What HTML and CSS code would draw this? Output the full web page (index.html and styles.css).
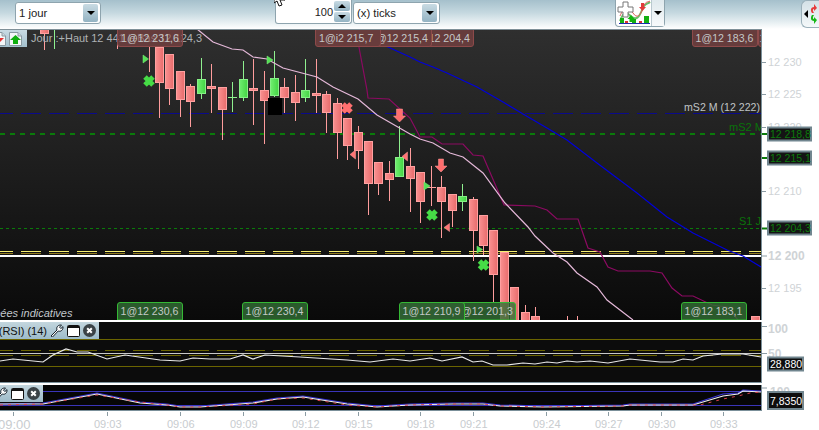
FILE: index.html
```html
<!DOCTYPE html>
<html lang="fr">
<head>
<meta charset="utf-8">
<title>Graphique</title>
<link rel="stylesheet" href="styles.css">
</head>
<body>
<svg class="defs" width="0" height="0">
  <defs>
    <linearGradient id="chartbg" x1="0" y1="0" x2="0" y2="1"><stop offset="0" stop-color="#2f2f2f"/><stop offset="1" stop-color="#0a0a0a"/></linearGradient>
    <linearGradient id="redbody" x1="0" y1="0" x2="1" y2="0"><stop offset="0" stop-color="#f99090"/><stop offset="1" stop-color="#e86c6c"/></linearGradient>
    <linearGradient id="greenbody" x1="0" y1="0" x2="1" y2="0"><stop offset="0" stop-color="#70ee70"/><stop offset="1" stop-color="#44d444"/></linearGradient>
    <symbol id="wrench" viewBox="0 0 14 13"><path d="M1 12 L7 6 C6 3 8 .8 11.5 1 L9.500 3.200 L10.800 4.600 L13 2.600 C13.300 6 11 8 8.200 7 L2.500 13 Z" fill="#fff" stroke="#14202a" stroke-width="1"/></symbol>
    <symbol id="win" viewBox="0 0 13 12"><rect x=".5" y=".5" width="12" height="11" rx="1" fill="#fff" stroke="#111"/><rect x="1" y="1" width="11" height="2" fill="#111"/></symbol>
    <symbol id="close" viewBox="0 0 13 13"><circle cx="6.500" cy="6.500" r="6.500" fill="#3a4246"/><path d="M4.200 4.200l4.600 4.600m0-4.600l-4.600 4.600" stroke="#fff" stroke-width="2"/></symbol>
    <symbol id="doc" viewBox="0 0 13 14"><path d="M.5 .5H9L12.500 4V13.500H.5Z" fill="#f4f7f8" stroke="#8a9aa2"/><path d="M9 .5V4H12.500" fill="#cfd9de" stroke="#8a9aa2"/></symbol>
  </defs>
</svg>

<header class="toolbar">
  <div class="combo combo-period"><span class="combo-text">1 jour</span><span class="drop"><i class="caret"></i></span></div>
  <div class="spinner">
    <span class="spin-value">100</span>
    <span class="spin-btns"><span class="spin-btn"><i class="caret caret-up"></i></span><span class="spin-btn"><i class="caret"></i></span></span>
  </div>
  <div class="combo combo-unit"><span class="combo-text">(x) ticks</span><span class="drop"><i class="caret"></i></span></div>
  <div class="indicator-btn">
    <span class="indicator-icon">
      <svg width="34" height="25" viewBox="0 0 34 25">
        <path d="M3 21C8 8 11 14 15 17S22 18 25 10 30 5 33 2" class="ic-green"/>
        <path d="M3 16C7 6 12 7 16 13S23 16 26 8 30 3 33 1" class="ic-red"/>
        <path d="M6 2h5v5h5v5h-5v5H6v-5H1V7h5z" class="ic-plus"/>
        <path d="M14 15l-3.500 4h2v3h3v-3h2z" fill="#11b411"/>
        <path d="M24 3h3v4h2l-3.500 4L22 7h2z" fill="#e13b3b"/>
        <path d="M3 18h4v5H3zm12 1h4v4h-4zm12-3h5v7h-5z" fill="#12b012"/>
        <path d="M8 21h3v2H8zm14 0h3v2h-3z" fill="#d83333"/>
        <path d="M2 23.500h31" stroke="#1b2fb0" stroke-width="1"/>
      </svg>
    </span>
    <span class="indicator-drop"><i class="caret"></i></span>
  </div>
  <div class="side-tab">
    <i class="caret caret-left"></i>
    <svg width="8" height="22" viewBox="0 0 8 22"><path d="M3 10C1 7 2 4 5 4V1l3 4-3 3V6C3.500 6 3.500 8 5 10Z" fill="#e63c3c"/><path d="M3 12C1 15 2 18 5 18v3l3-4-3-3v2C3.500 16 3.500 14 5 12Z" fill="#16b816"/></svg>
  </div>
  <svg class="cursor" width="13" height="9" viewBox="0 0 13 9"><path d="M0 -6L0 3L3 1L5 6L8 5L6 0L11 0Z" fill="#fff" stroke="#111" stroke-width="1"/></svg>
</header>

<section class="row row-main">
  <div class="plot">
    <svg class="canvas" width="761" height="291" viewBox="0 29 761 291">
      <rect x="0" y="29" width="761" height="291" fill="url(#chartbg)"/>

      <path class="l-navy" d="M0 113.500H761"/>
      <path class="l-green-thick" d="M0 134H761"/>
      <path class="l-green-thin" d="M0 228.500H761"/>
      <path class="l-yellow" d="M0 251.500H761"/>
      <path class="l-yellow-dark" d="M0 253.500H761"/>
      <rect x="0" y="255" width="761" height="2" fill="#fff"/>

      <path class="wick-r" d="M44.500 29V50M117.500 29V49M149.500 47V72M159.500 47V118M169.500 54V105M180.500 71V117M190.500 84V127M211.500 64V113M222.500 87V140M253.500 59V125M264.500 71V144M284.500 78V113M295.500 75V121M316.500 59V113M326.500 91V133M337.500 98V159M347.500 118V160M358.500 126V169M368.500 141V215M378.500 162V195M389.500 161V201M410.500 148V212M420.500 172V223M431.500 166V206M441.500 176V238M452.500 194V227M473.500 197V261M483.500 215V255M493.500 230V303M525.500 305V320M535.500 307V320M567.500 316V320M577.500 316V320"/>
      <path class="wick-g" d="M54.500 29V49M201.500 58V99M232.500 82V112M243.500 61V101M274.500 51V97M305.500 59V102M399.500 126V177M462.500 184V211"/>
      <path class="wick-r" d="M426 187.500H436"/>
      <path class="wick-g" d="M228 97.500H237"/>

      <g class="body-r">
        <rect x="40.500" y="29" width="8" height="4.500"/>
        <rect x="155.500" y="47.500" width="8" height="35"/><rect x="165.500" y="54.500" width="8" height="34"/><rect x="176.500" y="71.500" width="8" height="28"/><rect x="186.500" y="86.500" width="8" height="15"/>
        <rect x="207.500" y="86.500" width="8" height="2"/><rect x="218.500" y="87.500" width="8" height="22"/><rect x="249.500" y="88.500" width="8" height="2"/><rect x="260.500" y="90.500" width="8" height="10"/>
        <rect x="280.500" y="87.500" width="8" height="10"/><rect x="291.500" y="92.500" width="8" height="10"/><rect x="312.500" y="93.500" width="8" height="2"/><rect x="322.500" y="94.500" width="8" height="18"/>
        <rect x="333.500" y="103.500" width="8" height="29"/><rect x="343.500" y="118.500" width="8" height="27"/><rect x="354.500" y="132.500" width="8" height="18"/><rect x="364.500" y="141.500" width="8" height="42"/>
        <rect x="374.500" y="162.500" width="8" height="21"/><rect x="385.500" y="173.500" width="8" height="6"/><rect x="406.500" y="166.500" width="8" height="12"/><rect x="416.500" y="172.500" width="8" height="29"/>
        <rect x="437.500" y="187.500" width="8" height="14"/><rect x="448.500" y="194.500" width="8" height="16"/><rect x="469.500" y="199.500" width="8" height="31"/><rect x="479.500" y="215.500" width="8" height="30"/>
        <rect x="489.500" y="230.500" width="8" height="44"/><rect x="500.500" y="252.500" width="8" height="70"/><rect x="510.500" y="287.500" width="8" height="35"/><rect x="521.500" y="312.500" width="8" height="10"/>
        <rect x="531.500" y="316.500" width="8" height="6"/><rect x="751.500" y="316.500" width="8" height="6"/>
      </g>
      <g class="body-g">
        <rect x="197.500" y="79.500" width="8" height="14"/><rect x="239.500" y="79.500" width="8" height="18"/><rect x="270.500" y="78.500" width="8" height="17"/><rect x="301.500" y="90.500" width="8" height="7"/>
        <rect x="395.500" y="157.500" width="8" height="19"/><rect x="458.500" y="196.500" width="8" height="5"/>
      </g>
      <rect x="268" y="98" width="14" height="17" fill="#000"/>

      <path class="c-blue" d="M350 30L377 42L410 57L420 62L433 67L447 73L477 87L503 102L523 114L547 128L567 140L597 163L637 193L667 217L693 233L727 250L743 256L761 267"/>
      <path class="c-purple" d="M357 29L358 42L367 90L368 98L389 99L410 118L420 137L432 137L442 144L463 144L473 155L483 156L504 205L535 206L547 210L557 219L578 219L588 248L600 252L608 267L618 271L650 271L662 273L672 288L682 296L693 296L712 305L727 307L738 320"/>
      <path class="c-pink" d="M197 29L213 42L232 49L243 50L253 57L267 59L283 68L317 77L333 87L358 99L377 115L410 134L420 139L433 143L450 153L463 157L483 173L505 203L528 227L535 236L553 253L567 262L577 273L597 287L607 300L633 320"/>

      <path class="tri-g" d="M143 55L148.500 59L143 63Z"/><path class="tri-g" d="M267 56L273 60L267 64Z"/><path class="tri-g" d="M424 182L430 186L424 190Z"/><path class="tri-g" d="M477 246L482.500 249.500L477 253Z"/>
      <path class="tri-r" d="M355.500 150L350 154.500L355.500 159Z"/><path class="tri-r" d="M407.500 152L402 156.500L407.500 161Z"/><path class="tri-r" d="M449.500 223.500L444 227.500L449.500 231.500Z"/>
      <path class="x-g" d="M145 77l8 8m0-8l-8 8"/><path class="x-g" d="M428 211l8 8m0-8l-8 8"/><path class="x-g" d="M479.500 261l8 8m0-8l-8 8"/>
      <path class="x-r" d="M343 104l8 8m0-8l-8 8"/>
      <path class="arrow-r" d="M396.500 109h6v7h3l-6 6-6-6h3z"/><path class="arrow-r" d="M438.500 159h5v7h3.500l-6 6-6-6h3.500z"/>

      <text class="txt-info" x="31" y="42">Jour :+Haut 12 441 |+Bas 12 124,3</text>
      <text class="txt-note" x="-26" y="317">Données indicatives</text>
      <text class="txt-mini" x="684" y="111">mS2 M (12 222)</text>
      <text class="txt-level" x="729" y="131">mS2 M</text>
      <text class="txt-level" x="739" y="225">S1 J</text>

      <path class="lab-r" d="M117.500 29V44a2.500 2.500 0 0 0 2.500 2.500H180a2.500 2.500 0 0 0 2.500-2.500V29Z"/><text class="lab-t" x="121" y="42">1@12 231,6</text>
      <path class="lab-r" d="M408.500 29V44a2.500 2.500 0 0 0 2.500 2.500H471a2.500 2.500 0 0 0 2.500-2.500V29Z"/><text class="lab-t" x="412" y="42">1@12 204,4</text>
      <path class="lab-r lab-solid" d="M366.500 29V44a2.500 2.500 0 0 0 2.500 2.500H429a2.500 2.500 0 0 0 2.500-2.500V29Z"/><text class="lab-t" x="370" y="42">1@12 215,4</text>
      <path class="lab-r lab-solid" d="M315.500 29V44a2.500 2.500 0 0 0 2.500 2.500H378a2.500 2.500 0 0 0 2.500-2.500V29Z"/><text class="lab-t" x="319" y="42">1@i2 215,7</text>
      <path class="lab-r" d="M692.500 29V44a2.500 2.500 0 0 0 2.500 2.500H755a2.500 2.500 0 0 0 2.500-2.500V29Z"/><text class="lab-t" x="695.500" y="42">1@12 183,6</text>
      <path class="lab-r" d="M758.500 29V44a2.500 2.500 0 0 0 2.500 2.500H821V29Z"/><text class="lab-t" x="759.500" y="42">1@12 183,6</text>

      <path class="lab-g" d="M117.500 320V305a2.500 2.500 0 0 1 2.500-2.500H180a2.500 2.500 0 0 1 2.500 2.500V320Z"/><text class="lab-t" x="120.500" y="315">1@12 230,6</text>
      <path class="lab-g" d="M242.500 320V305a2.500 2.500 0 0 1 2.500-2.500H305a2.500 2.500 0 0 1 2.500 2.500V320Z"/><text class="lab-t" x="245.500" y="315">1@12 230,4</text>
      <path class="lab-g" d="M450.500 320V305a2.500 2.500 0 0 1 2.500-2.500H513a2.500 2.500 0 0 1 2.500 2.500V320Z"/><text class="lab-t" x="455" y="315">1@12 201,3</text>
      <path class="lab-g lab-solid-g" d="M399.500 320V305a2.500 2.500 0 0 1 2.500-2.500H462a2.500 2.500 0 0 1 2.500 2.500V320Z"/><text class="lab-t" x="402.500" y="315">1@12 210,9</text>
      <path class="lab-g" d="M681.500 320V305a2.500 2.500 0 0 1 2.500-2.500H744a2.500 2.500 0 0 1 2.500 2.500V320Z"/><text class="lab-t" x="684.500" y="315">1@12 183,1</text>
      <path class="topline" d="M0 29.500H761"/>
    </svg>
    <div class="doc-btns">
      <svg class="doc-ic doc-red" width="13" height="14" viewBox="0 0 13 14"><use href="#doc"/><path d="M2 6h9l-4.500 4.500z" fill="#e53030"/></svg>
      <svg class="doc-ic" width="13" height="14" viewBox="0 0 13 14"><use href="#doc"/><path d="M6.500 3L12 8H9v4H4V8H1z" fill="#0fae0f"/></svg>
    </div>
  </div>
  <div class="axis">
    <svg width="57" height="291" viewBox="762 29 57 291">
      <path class="tick" d="M762 62.500h4M762 94.500h4M762 127.500h4M762 191.500h4M762 288.500h4M762 256h5"/>
      <path class="tick-green" d="M762 134h5M762 158h5M762 228.500h5"/>
      <text class="ax" x="768" y="66">12 230</text>
      <text class="ax" x="768" y="98">12 225</text>
      <text class="ax" x="768" y="131">12 220</text>
      <text class="ax" x="768" y="195">12 210</text>
      <text class="ax ax-strong" x="768" y="260">12 200</text>
      <text class="ax" x="768" y="292">12 195</text>
      <rect class="vbox" x="768" y="127.500" width="43" height="13"/><text class="vbox-t" x="770" y="138">12 218,8</text>
      <rect class="vbox" x="768" y="151.500" width="43" height="13"/><text class="vbox-t" x="770" y="162">12 215,1</text>
      <rect class="vbox" x="768" y="221.500" width="43" height="13"/><text class="vbox-t" x="770" y="232">12 204,3</text>
    </svg>
  </div>
</section>

<section class="row row-rsi">
  <div class="plot">
    <svg class="canvas" width="761" height="60" viewBox="0 322 761 60">
      <rect x="0" y="322" width="761" height="60" fill="#0c0c0c"/>
      <path class="l-olive" d="M0 339.500H761M0 366.500H761"/>
      <path class="l-olive-dash" d="M0 350.500H761M0 355.500H761"/>
      <path class="l-white" d="M0 353.500H761"/>
      <path class="c-white" d="M0 361L13 359L43 362L53 355L66 349L77 352L88 352L107 359L125 355L160 360L180 361L193 358L210 359L230 359L243 355L253 359L265 355L300 357L347 360L370 362L393 359L410 361L430 358L442 361L462 357L473 362L482 361L493 365L507 365L523 363L535 364L547 362L557 363L567 361L577 362L590 361L608 363L630 359L660 362L673 362L683 359L693 360L703 356L722 354L743 354L761 357"/>
    </svg>
    <div class="ind-head ind-rsi">
      <span class="ind-name">(RSI) (14)</span>
      <svg class="ic-wrench"><use href="#wrench"/></svg>
      <svg class="ic-win"><use href="#win"/></svg>
      <svg class="ic-close"><use href="#close"/></svg>
    </div>
  </div>
  <div class="axis">
    <svg width="57" height="60" viewBox="762 322 57 60">
      <path class="tick" d="M762 326.500h5M762 353.500h5"/>
      <text class="ax ax-strong" x="768" y="333">100</text>
      <text class="ax ax-strong" x="768" y="358">50</text>
      <rect class="vbox vbox-dark" x="768" y="357.500" width="35" height="13"/><text class="vbox-w" x="770" y="368">28,880</text>
    </svg>
  </div>
</section>

<section class="row row-stoch">
  <div class="plot">
    <svg class="canvas" width="761" height="25" viewBox="0 385 761 25">
      <rect x="0" y="385" width="761" height="25" fill="#060606"/>
      <path class="l-indigo" d="M0 391.500H761M0 405.500H761"/>
      <path class="c-stoch-b" d="M0 404L43 403L97 393L140 402L167 404L180 406L200 406L253 402L277 398L303 396L347 403L377 406L410 404L453 403L483 403L500 405L543 406L623 405L630 404L693 404L723 394L738 393L743 390L761 391"/>
      <path class="c-stoch-w" d="M0 404L43 404L97 394L140 403L167 405L180 407L200 407L253 403L277 399L303 397L347 404L377 407L410 405L453 404L483 404L500 406L543 407L623 406L630 405L693 405L723 396L738 394L743 391L761 392"/>
      <path class="c-stoch-r" d="M0 405L43 404L97 395L140 402L167 405L180 407L200 407L253 404L277 399L303 398L347 405L377 407L410 405L453 404L483 404L500 406L543 407L623 406L630 405L700 405L723 399L738 396L750 393L761 392"/>
    </svg>
    <div class="ind-head ind-stoch">
      <svg class="ic-wrench"><use href="#wrench"/></svg>
      <svg class="ic-win"><use href="#win"/></svg>
      <svg class="ic-close"><use href="#close"/></svg>
    </div>
  </div>
  <div class="axis">
    <svg width="57" height="25" viewBox="762 385 57 25">
      <path class="tick" d="M762 388h5"/>
      <text class="ax ax-strong" x="770" y="396">100</text>
      <rect class="vbox vbox-dark" x="768" y="392" width="35" height="17"/><text class="vbox-w" x="770" y="405">7,8350</text>
    </svg>
  </div>
</section>

<footer class="timeline">
  <svg width="819" height="20" viewBox="0 410 819 20">
    <path class="tick" d="M13.500 411v4M107.500 411v4M180.500 411v4M243.500 411v4M305.500 411v4M358.500 411v4M420.500 411v4M473.500 411v4M546.500 411v4M608.500 411v4M661.500 411v4M723.500 411v4"/>
    <text class="time time-big" x="-2" y="428">09:00</text>
    <text class="time" x="94" y="427">09:03</text>
    <text class="time" x="167" y="427">09:06</text>
    <text class="time" x="230" y="427">09:09</text>
    <text class="time" x="292" y="427">09:12</text>
    <text class="time" x="345" y="427">09:15</text>
    <text class="time" x="407" y="427">09:18</text>
    <text class="time" x="460" y="427">09:21</text>
    <text class="time" x="533" y="427">09:24</text>
    <text class="time" x="595" y="427">09:27</text>
    <text class="time" x="648" y="427">09:30</text>
    <text class="time" x="710" y="427">09:33</text>
  </svg>
</footer>
</body>
</html>
```

FILE: styles.css
```css
* { box-sizing: border-box; }
html, body { margin: 0; padding: 0; }
body {
  width: 819px;
  height: 430px;
  overflow: hidden;
  background: #fff;
  font-family: "Liberation Sans", Arial, sans-serif;
  display: flex;
  flex-direction: column;
}
.defs { position: absolute; }
svg { display: block; }

.toolbar {
  position: relative;
  height: 29px;
  flex: none;
  display: flex;
  align-items: flex-start;
  overflow: hidden;
  background: linear-gradient(to bottom, #a5c0cc 0%, #c6d9e0 45%, #ffffff 100%);
  padding-left: 15px;
}
.combo {
  height: 22px;
  margin-top: 2px;
  background: #fff;
  border: 1px solid #8ea4ae;
  border-radius: 3px;
  display: flex;
  align-items: center;
  justify-content: space-between;
  padding: 0 2px 0 3px;
  font-size: 11.300px;
  color: #222;
}
.combo-period { width: 86px; }
.combo-unit { width: 87px; margin-left: 1px; }
.drop {
  width: 15px;
  height: 18px;
  border-radius: 2px;
  background: linear-gradient(to bottom, #c9dbe3, #93b3c3);
  display: flex;
  align-items: center;
  justify-content: center;
}
.caret {
  display: block;
  width: 0;
  height: 0;
  border-left: 4px solid transparent;
  border-right: 4px solid transparent;
  border-top: 4px solid #000;
}
.caret-up { border-top: 0; border-bottom: 4px solid #000; }
.caret-left {
  border-top: 4px solid transparent;
  border-bottom: 4px solid transparent;
  border-right: 4px solid #000;
  border-left: 0;
}
.spinner {
  width: 77px;
  height: 24px;
  margin-left: 174px;
  background: #fff;
  border: 1px solid #8ea4ae;
  border-top: 0;
  border-radius: 0 0 3px 3px;
  display: flex;
  align-items: center;
  justify-content: flex-end;
  font-size: 11px;
  color: #222;
  padding-right: 1px;
}
.spin-value { margin-right: 1px; }
.spin-btns { display: flex; flex-direction: column; gap: 1px; }
.spin-btn {
  width: 16px;
  height: 10px;
  border-radius: 2px;
  background: linear-gradient(to bottom, #c9dbe3, #93b3c3);
  display: flex;
  align-items: center;
  justify-content: center;
}
.indicator-btn {
  width: 50px;
  height: 27px;
  margin-left: 175px;
  background: #fff;
  border: 1px solid #8ea4ae;
  border-top: 0;
  border-radius: 0 0 4px 4px;
  display: flex;
}
.indicator-icon { width: 35px; padding-left: 1px; }
.indicator-drop {
  flex: 1;
  border-left: 1px solid #b9c8cf;
  background: linear-gradient(to bottom, #dfe9ed, #f8fafb);
  display: flex;
  align-items: center;
  justify-content: center;
}
.side-tab {
  width: 18px;
  height: 28px;
  margin-left: 136px;
  background: linear-gradient(to bottom, #d4e1e7, #f4f8f9);
  border: 1px solid #9bb0ba;
  border-right: 0;
  border-radius: 6px 0 0 6px;
  display: flex;
  align-items: center;
  padding-left: 2px;
  gap: 1px;
}
.cursor { position: absolute; left: 274px; top: 0; }

.ic-green { fill: none; stroke: #69c169; stroke-width: 2; }
.ic-red { fill: none; stroke: #df5a5a; stroke-width: 1; }
.ic-plus { fill: #fff; stroke: #777; stroke-width: 1; }

.row { display: flex; flex: none; }
.row-main { height: 291px; margin-bottom: 2px; }
.row-rsi { height: 61px; margin-bottom: 2px; }
.row-stoch { height: 26px; }
.plot {
  position: relative;
  width: 762px;
  flex: none;
  border-right: 1px solid #7b909a;
  border-bottom: 1px solid #7b909a;
  overflow: hidden;
}
.row-main .plot { border-bottom: 0; border-top: 0; }
.axis { flex: 1; background: #fff; }

.timeline { flex: none; height: 20px; }

.doc-btns {
  position: absolute;
  left: 0;
  top: 1px;
  width: 27px;
  height: 17px;
  display: flex;
  align-items: center;
  justify-content: flex-end;
  gap: 3px;
  padding-right: 5px;
  background: linear-gradient(to bottom, #c9dbe3, #a3c0cd);
  overflow: hidden;
}
.doc-ic { flex: none; }

.topline { stroke: #7f9098; stroke-width: 1; fill: none; }
.l-navy { stroke: #0a0a8c; stroke-width: 1; stroke-dasharray: 20 8; stroke-dashoffset: 7; fill: none; }
.l-green-thick { stroke: #0a7a0a; stroke-width: 2; stroke-dasharray: 5 5; fill: none; }
.l-green-thin { stroke: #0a7a0a; stroke-width: 1; stroke-dasharray: 3 3; fill: none; }
.l-yellow { stroke: #f5ee70; stroke-width: 1; stroke-dasharray: 20 8; stroke-dashoffset: 7; fill: none; }
.l-yellow-dark { stroke: #8f7a1c; stroke-width: 1; stroke-dasharray: 20 8; stroke-dashoffset: 7; fill: none; }

.wick-r { stroke: #ff9d9d; stroke-width: 1; fill: none; }
.wick-g { stroke: #8ff08f; stroke-width: 1; fill: none; }
.body-r rect { fill: url(#redbody); stroke: #ffa0a0; stroke-width: 1; }
.body-g rect { fill: url(#greenbody); stroke: #86f086; stroke-width: 1; }

.c-blue { fill: none; stroke: #0000dc; stroke-width: 1.200; }
.c-purple { fill: none; stroke: #8c0a62; stroke-width: 1.200; }
.c-pink { fill: none; stroke: #e4b8d8; stroke-width: 1.200; }

.tri-g { fill: #55e055; stroke: #7cf07c; stroke-width: .5; }
.tri-r { fill: #ff7474; stroke: #ff9a9a; stroke-width: .5; }
.x-g { stroke: #46dc46; stroke-width: 5; fill: none; }
.x-r { stroke: #ff7070; stroke-width: 5; fill: none; }
.arrow-r { fill: #ff6e6e; stroke: #ff9999; stroke-width: .5; }

svg text { font-family: "Liberation Sans", Arial, sans-serif; font-size: 11px; }
.txt-info { fill: #aeb2b4; font-size: 11px; }
.txt-mini { fill: #c0c4c6; font-size: 10.600px; }
.txt-note { fill: #c2c8cc; font-size: 11px; font-style: italic; }
.txt-level { fill: #0a720a; font-size: 11px; }
.lab-r { fill: rgba(140, 70, 70, .6); stroke: #8d4a4a; stroke-width: 1; }
.lab-solid { fill: #683c3c; }
.lab-g { fill: rgba(50, 110, 52, .8); stroke: #35b835; stroke-width: 1; }
.lab-solid-g { fill: #2e5e30; }
.lab-t { fill: #c4c8c8; font-size: 10.600px; }

.tick { stroke: #8c9ca4; stroke-width: 1; fill: none; }
.tick-green { stroke: #0a7a0a; stroke-width: 2; fill: none; }
.ax { fill: #cfd3d6; font-size: 11px; }
.ax-strong { font-weight: bold; font-size: 12px; }
.vbox { fill: #141414; stroke: #71868f; stroke-width: 2; }
.vbox-dark { fill: #0d0d0d; }
.vbox-t { fill: #0c7a0c; font-size: 10.500px; }
.vbox-w { fill: #fff; font-size: 10.500px; }

.l-olive { stroke: #6b6400; stroke-width: 1; fill: none; }
.l-olive-dash { stroke: #6b6400; stroke-width: 1; stroke-dasharray: 20 8; stroke-dashoffset: 7; fill: none; }
.l-white { stroke: #c9c9c9; stroke-width: 1; fill: none; }
.c-white { stroke: #e8e8e8; stroke-width: 1.200; fill: none; }
.l-indigo { stroke: #3a34b8; stroke-width: 1; fill: none; }
.c-stoch-b { stroke: #3a34d8; stroke-width: 1.200; fill: none; }
.c-stoch-w { stroke: #f2f2f2; stroke-width: 1.200; fill: none; }
.c-stoch-r { stroke: #d8404a; stroke-width: 1; stroke-dasharray: 3 5; fill: none; }

.ind-head {
  position: absolute;
  left: 0;
  top: 0;
  height: 17px;
  display: flex;
  align-items: center;
  justify-content: flex-end;
  background: linear-gradient(to bottom, #c3d6de, #9dbbc9);
  overflow: hidden;
  padding-right: 3px;
  gap: 3px;
}
.ind-rsi { width: 99px; }
.ind-stoch { width: 43px; }
.ind-name { font-size: 11px; color: #101010; white-space: nowrap; }
.ic-wrench { width: 14px; height: 13px; flex: none; }
.ic-win { width: 13px; height: 12px; flex: none; }
.ic-close { width: 13px; height: 13px; flex: none; }

.time { fill: #c8cccf; font-size: 11px; }
.time-big { font-size: 13px; }
```
